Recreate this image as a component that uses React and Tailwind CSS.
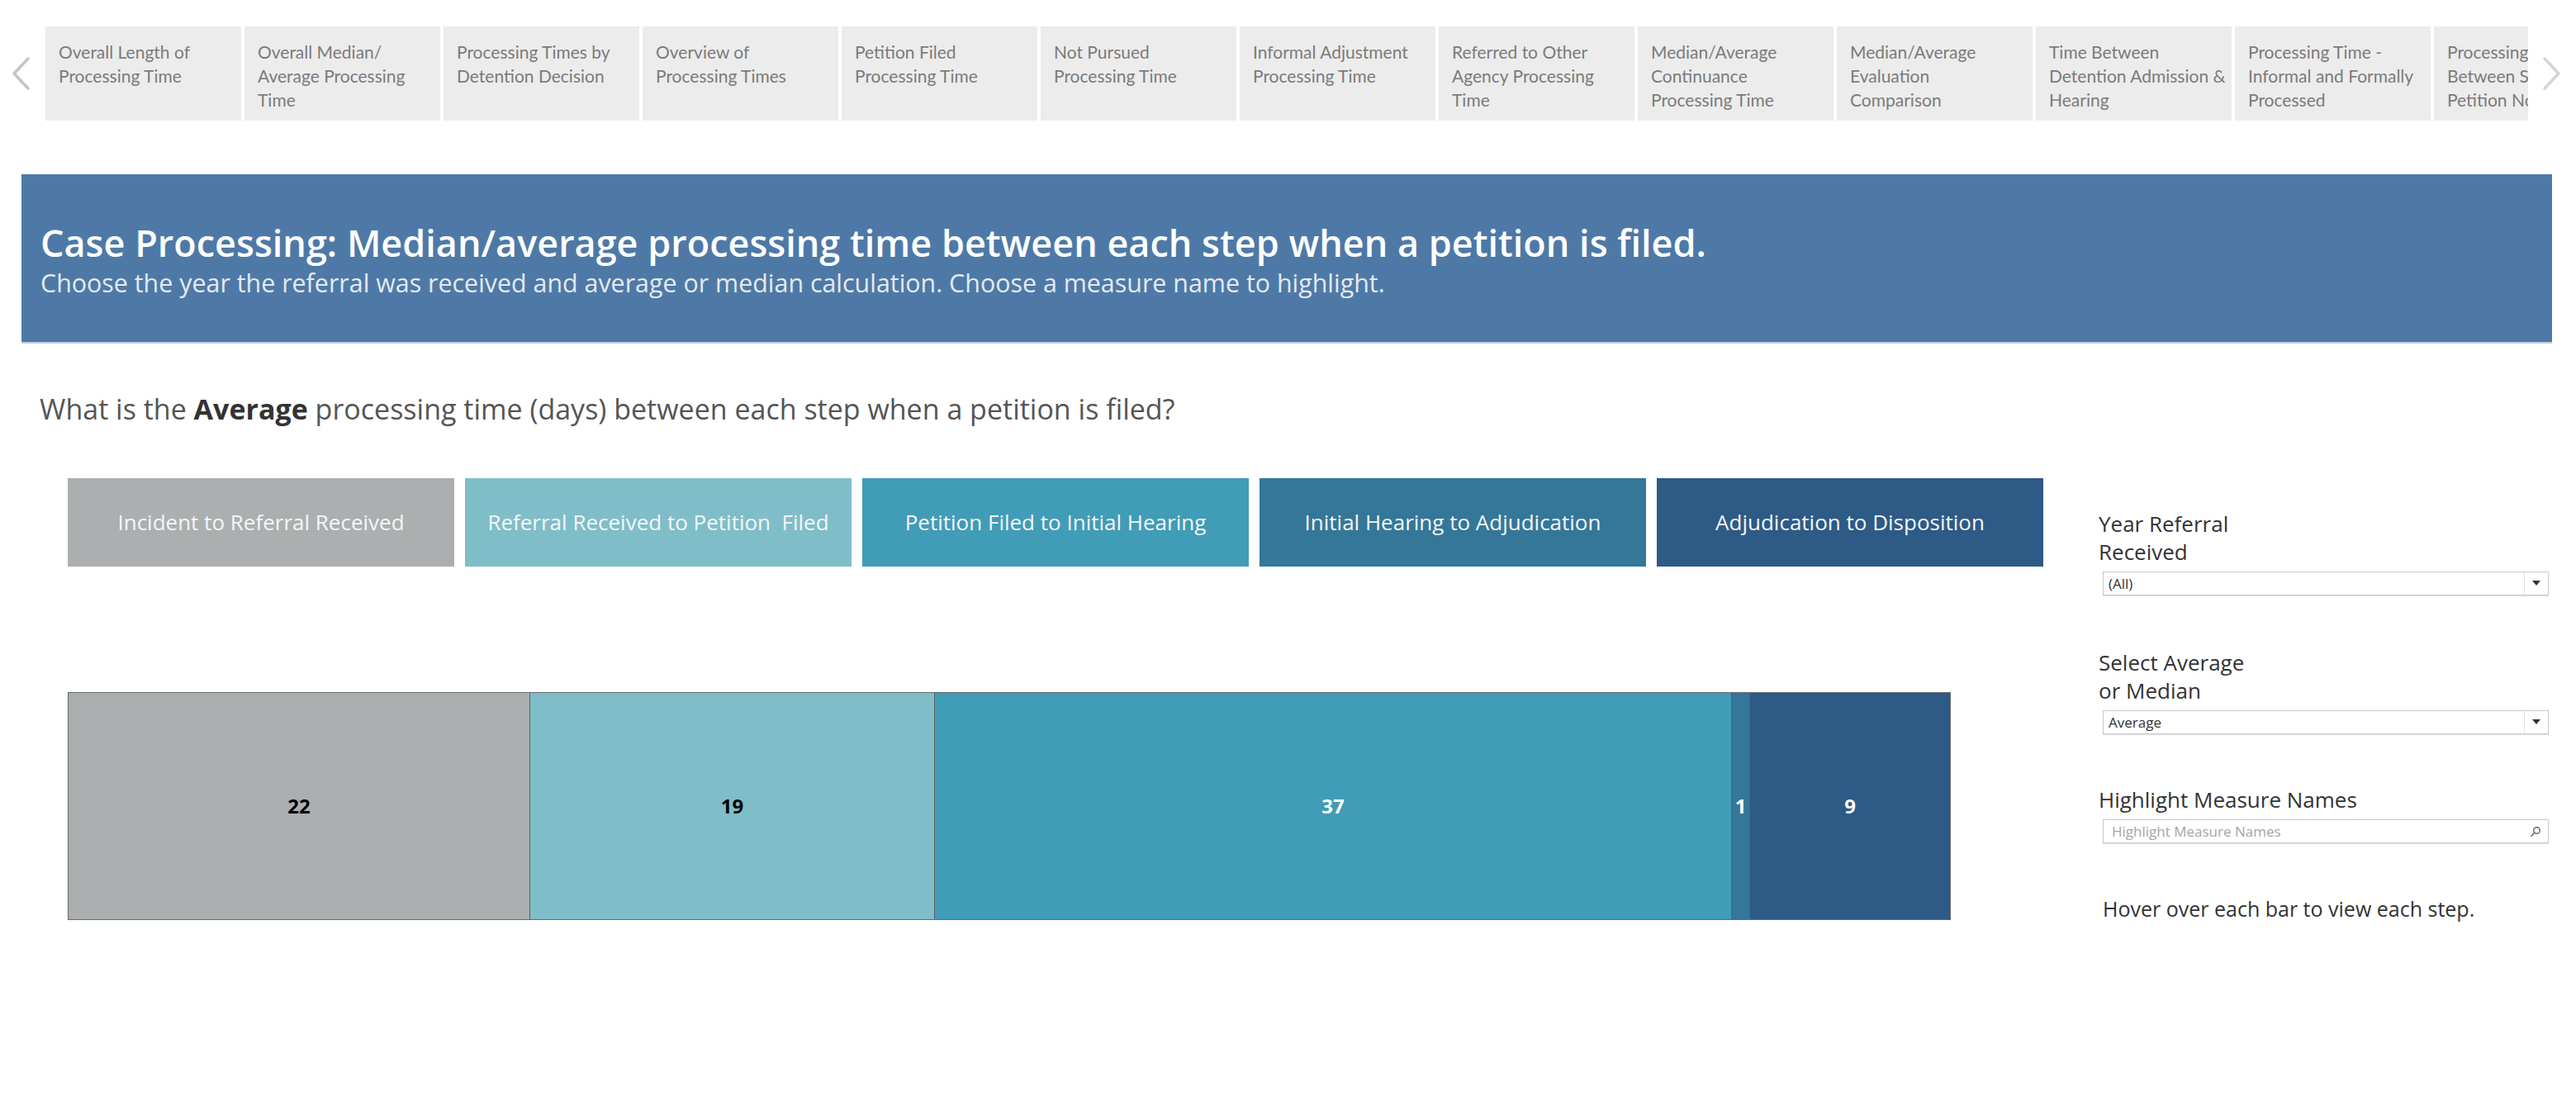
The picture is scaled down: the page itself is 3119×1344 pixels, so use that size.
import React from "react";

const tabs = [
  ["Overall Length of", "Processing Time"],
  ["Overall Median/", "Average Processing", "Time"],
  ["Processing Times by", "Detention Decision"],
  ["Overview of", "Processing Times"],
  ["Petition Filed", "Processing Time"],
  ["Not Pursued", "Processing Time"],
  ["Informal Adjustment", "Processing Time"],
  ["Referred to Other", "Agency Processing", "Time"],
  ["Median/Average", "Continuance", "Processing Time"],
  ["Median/Average", "Evaluation", "Comparison"],
  ["Time Between", "Detention Admission &", "Hearing"],
  ["Processing Time -", "Informal and Formally", "Processed"],
  ["Processing Time", "Between Status and", "Petition Not Filed"],
];

const legend = [
  { label: "Incident to Referral Received", cls: "bg-[#abafb0]" },
  { label: "Referral Received to Petition  Filed", cls: "bg-[#7fbec8]" },
  { label: "Petition Filed to Initial Hearing", cls: "bg-[#419cb7]" },
  { label: "Initial Hearing to Adjudication", cls: "bg-[#347799]" },
  { label: "Adjudication to Disposition", cls: "bg-[#2e5a86]" },
];

const OPEN = { fontFamily: "'Open Sans', 'Liberation Sans', sans-serif" };

function Chevron({ dir }) {
  return (
    <svg width="26" height="42" viewBox="0 0 26 42" fill="none">
      {dir === "left" ? (
        <polyline points="22,3 5,21 22,39" stroke="#c4c4c4" strokeWidth="3.5" strokeLinecap="round" strokeLinejoin="round" />
      ) : (
        <polyline points="4,3 21,21 4,39" stroke="#d4d4d4" strokeWidth="3.5" strokeLinecap="round" strokeLinejoin="round" />
      )}
    </svg>
  );
}

function Dropdown({ value }) {
  return (
    <div className="flex h-[29px] w-[540px] items-stretch border border-[#c9c9c9] bg-white shadow-[0_1px_1px_rgba(0,0,0,0.12)]">
      <div className="flex flex-1 items-center pl-[6px] text-[17px] text-[#333]">{value}</div>
      <div className="flex w-[29px] items-center justify-center border-l border-[#e2e2e2]">
        <svg width="10" height="7" viewBox="0 0 10 7">
          <polygon points="0,0 10,0 5,6" fill="#333" />
        </svg>
      </div>
    </div>
  );
}

export default function App() {
  return (
    <div
      className="relative h-[1344px] w-[3119px] overflow-hidden bg-white"
      style={OPEN}
    >
      {/* Tab strip */}
      <div className="flex items-center pt-[32px]">
        <div className="flex w-[55px] items-center justify-start pl-[12px]">
          <Chevron dir="left" />
        </div>
        <div
          className="flex w-[3006px] gap-[4px] overflow-hidden"
          style={{ fontFamily: "Lato, 'Liberation Sans', sans-serif" }}
        >
          {tabs.map((t, i) => (
            <div
              key={i}
              className="h-[114px] w-[237px] shrink-0 overflow-hidden bg-[#ececec] pl-[16px] pt-[16px] text-[21px] leading-[29px] text-[#7b7b7b]"
            >
              {t.map((line, j) => (
                <div key={j} className="whitespace-nowrap">
                  {line}
                </div>
              ))}
            </div>
          ))}
        </div>
        <div className="flex flex-1 items-center pl-[16px]">
          <Chevron dir="right" />
        </div>
      </div>

      {/* Banner */}
      <div className="ml-[26px] mt-[65px] h-[205px] w-[3064px] border-b-2 border-[#c3cfdc] bg-[#4e79a7] pl-[23px] pt-[55px]">
        <div className="whitespace-nowrap text-[45px] font-semibold leading-[56px] text-white">
          Case Processing: Median/average processing time between each step when a petition is filed.
        </div>
        <div className="mt-[2px] whitespace-nowrap text-[30.4px] leading-[38px] text-[#e3e9f0]">
          Choose the year the referral was received and average or median calculation. Choose a measure name to highlight.
        </div>
      </div>

      {/* Question */}
      <div className="ml-[48px] mt-[59px] whitespace-nowrap text-[34px] leading-[40px] text-[#555]">
        What is the <span className="font-bold text-[#333]">Average</span> processing time (days) between each step when a petition is filed?
      </div>

      {/* Main row */}
      <div className="mt-[64px] flex">
        {/* Left: legend + bar */}
        <div className="ml-[82px] w-[2392px]">
          <div className="flex gap-[13px]">
            {legend.map((l, i) => (
              <div
                key={i}
                className={`flex h-[107px] w-[468px] items-center justify-center whitespace-pre text-[26px] text-[#f4f6f7] ${l.cls}`}
              >
                {l.label}
              </div>
            ))}
          </div>

          <div className="mt-[152px] flex h-[276px] w-[2280px] border border-[#6a6a6a]">
            <div className="flex w-[558px] items-center justify-center bg-[#abafb0] text-[24px] font-bold text-black">22</div>
            <div className="flex w-[490px] items-center justify-center border-l border-[#5f5f5f] bg-[#7fbec8] text-[24px] font-bold text-black">19</div>
            <div className="flex w-[965px] items-center justify-center border-l border-[#5f5f5f] bg-[#419cb7] text-[24px] font-bold text-white">37</div>
            <div className="flex w-[22px] items-center justify-center border-l border-[#5f5f5f] bg-[#347799] text-[24px] font-bold text-white">1</div>
            <div className="flex flex-1 items-center justify-center border-l border-[#5f5f5f] bg-[#2e5a86] text-[24px] font-bold text-white">9</div>
          </div>
        </div>

        {/* Right panel */}
        <div className="ml-[67px] w-[550px] pt-[38px] text-[#333]">
          <div className="text-[26px] leading-[34px]">
            <div>Year Referral</div>
            <div>Received</div>
          </div>
          <div className="ml-[5px] mt-[7px]">
            <Dropdown value="(All)" />
          </div>

          <div className="mt-[64px] text-[26px] leading-[34px]">
            <div>Select Average</div>
            <div>or Median</div>
          </div>
          <div className="ml-[5px] mt-[7px]">
            <Dropdown value="Average" />
          </div>

          <div className="mt-[62px] text-[26px] leading-[34px]">Highlight Measure Names</div>
          <div className="ml-[5px] mt-[7px] flex h-[29px] w-[540px] items-center border border-[#c9c9c9] bg-white pl-[10px] pr-[8px] shadow-[0_1px_1px_rgba(0,0,0,0.12)]">
            <div className="flex-1 text-[17px] text-[#a5a5a5]">Highlight Measure Names</div>
            <svg width="14" height="14" viewBox="0 0 14 14" fill="none">
              <circle cx="8.5" cy="5.5" r="3.8" stroke="#666" strokeWidth="1.4" />
              <line x1="5.8" y1="8.3" x2="2" y2="12.3" stroke="#666" strokeWidth="1.6" strokeLinecap="round" />
            </svg>
          </div>

          <div className="ml-[5px] mt-[62px] whitespace-nowrap text-[25px] leading-[34px] text-[#333]">
            Hover over each bar to view each step.
          </div>
        </div>
      </div>
    </div>
  );
}
